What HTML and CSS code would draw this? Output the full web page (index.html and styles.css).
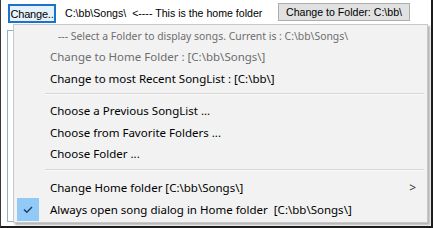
FILE: index.html
```html
<!DOCTYPE html>
<html>
<head>
<meta charset="utf-8">
<link rel="stylesheet" href="styles.css">
</head>
<body>
<div class="frame">
  <div class="toolbar">
    <button class="btn-change">Change..</button>
    <span class="path">C:\bb\Songs\&nbsp;&nbsp;&lt;---- This is the home folder</span>
    <button class="btn-folder">Change to Folder: C:\bb\</button>
  </div>
  <div class="listbox"></div>

  <div class="menu">
    <div class="item first disabled title">--- Select a Folder to display songs. Current is : C:\bb\Songs\</div>
    <div class="item disabled">Change to Home Folder : [C:\bb\Songs\]</div>
    <div class="item">Change to most Recent SongList : [C:\bb\]</div>
    <div class="sep sep1"></div>
    <div class="item">Choose a Previous SongList ...</div>
    <div class="item short">Choose from Favorite Folders ...</div>
    <div class="item short">Choose Folder ...</div>
    <div class="sep sep2"></div>
    <div class="item sub">Change Home folder [C:\bb\Songs\]<span class="arrow">&gt;</span></div>
    <div class="item checked"><span class="check"><svg width="22" height="23" viewBox="0 0 22 23"><path d="M7 11.5 L9.8 14.3 L15 9" fill="none" stroke="#1f3e66" stroke-width="1.4"/></svg></span>Always open song dialog in Home folder&nbsp; [C:\bb\Songs\]</div>
  </div>
</div>
</body>
</html>
```

FILE: styles.css
```css
html, body {
  margin: 0;
  padding: 0;
  background: #ffffff;
}

.frame {
  position: relative;
  width: 433px;
  height: 228px;
  box-sizing: border-box;
  border-left: 1px solid #3a3a3a;
  border-right: 2px solid #1c1c1c;
  border-bottom: 2px solid #1c1c1c;
  background: #ffffff;
  overflow: hidden;
}

.toolbar {
  display: flex;
  align-items: center;
  height: 26px;
  padding-left: 7px;
  box-sizing: border-box;
  font-family: "Liberation Sans", Arial, sans-serif;
  font-size: 10.6px;
  color: #000;
}

.btn-change {
  margin: 0;
  height: 19px;
  width: 48px;
  padding: 0;
  text-align: center;
  background: #e5f1fb;
  border: 2px solid #1a73c9;
  font: inherit;
  font-size: 11px;
  letter-spacing: -0.2px;
  color: #000;
  margin-top: 1px;
  white-space: nowrap;
  overflow: visible;
}

.path {
  margin-left: 9px;
  white-space: pre;
}

.btn-folder {
  margin: 0 0 0 auto;
  margin-right: 21px;
  height: 18px;
  width: 132px;
  margin-top: -2px;
  padding: 0 0 0 7px;
  text-align: left;
  background: #e1e1e1;
  border: 1px solid #adadad;
  font: inherit;
  color: #000;
  white-space: nowrap;
}

.listbox {
  margin-left: 6px;
  margin-top: 4px;
  width: 418px;
  height: 190px;
  border: 1px solid #8fb0cf;
  background: #fff;
}

.menu {
  position: absolute;
  left: 12px;
  top: 24px;
  width: 415px;
  height: 199px;
  box-sizing: border-box;
  background: #f2f2f2;
  border: 1px solid #c8c8c8;
  box-shadow: 2px 2px 2px rgba(0, 0, 0, 0.3);
  font-family: "Noto Sans", "Open Sans", sans-serif;
  font-size: 11.5px;
  color: #000;
  display: flex;
  flex-direction: column;
}

.item {
  height: 22px;
  line-height: 22px;
  padding-left: 36px;
  white-space: nowrap;
  display: flex;
  align-items: center;
  position: relative;
}

.item.first {
  height: 21px;
}

.item.short {
  height: 21px;
}

.title {
  padding-left: 44px;
  font-size: 10.4px;
  color: #747474;
}

.disabled {
  color: #6d6d6d;
}

.sep {
  box-sizing: border-box;
  margin-left: 31px;
  margin-right: 3px;
}

.sep1 {
  height: 10px;
  padding-top: 3px;
}

.sep2 {
  height: 13px;
  padding-top: 5px;
}

.sep::before {
  content: "";
  display: block;
  height: 1px;
  background: #d7d7d7;
  border-bottom: 1px solid #fbfbfb;
}

.arrow {
  position: absolute;
  right: 11px;
  top: 0;
  color: #333;
  font-size: 12px;
}

.checked {
  padding-left: 36px;
}

.check {
  position: absolute;
  left: 3px;
  top: -1px;
  width: 22px;
  height: 23px;
  background: #91c9f7;
  display: block;
}

.check svg {
  display: block;
}
```
